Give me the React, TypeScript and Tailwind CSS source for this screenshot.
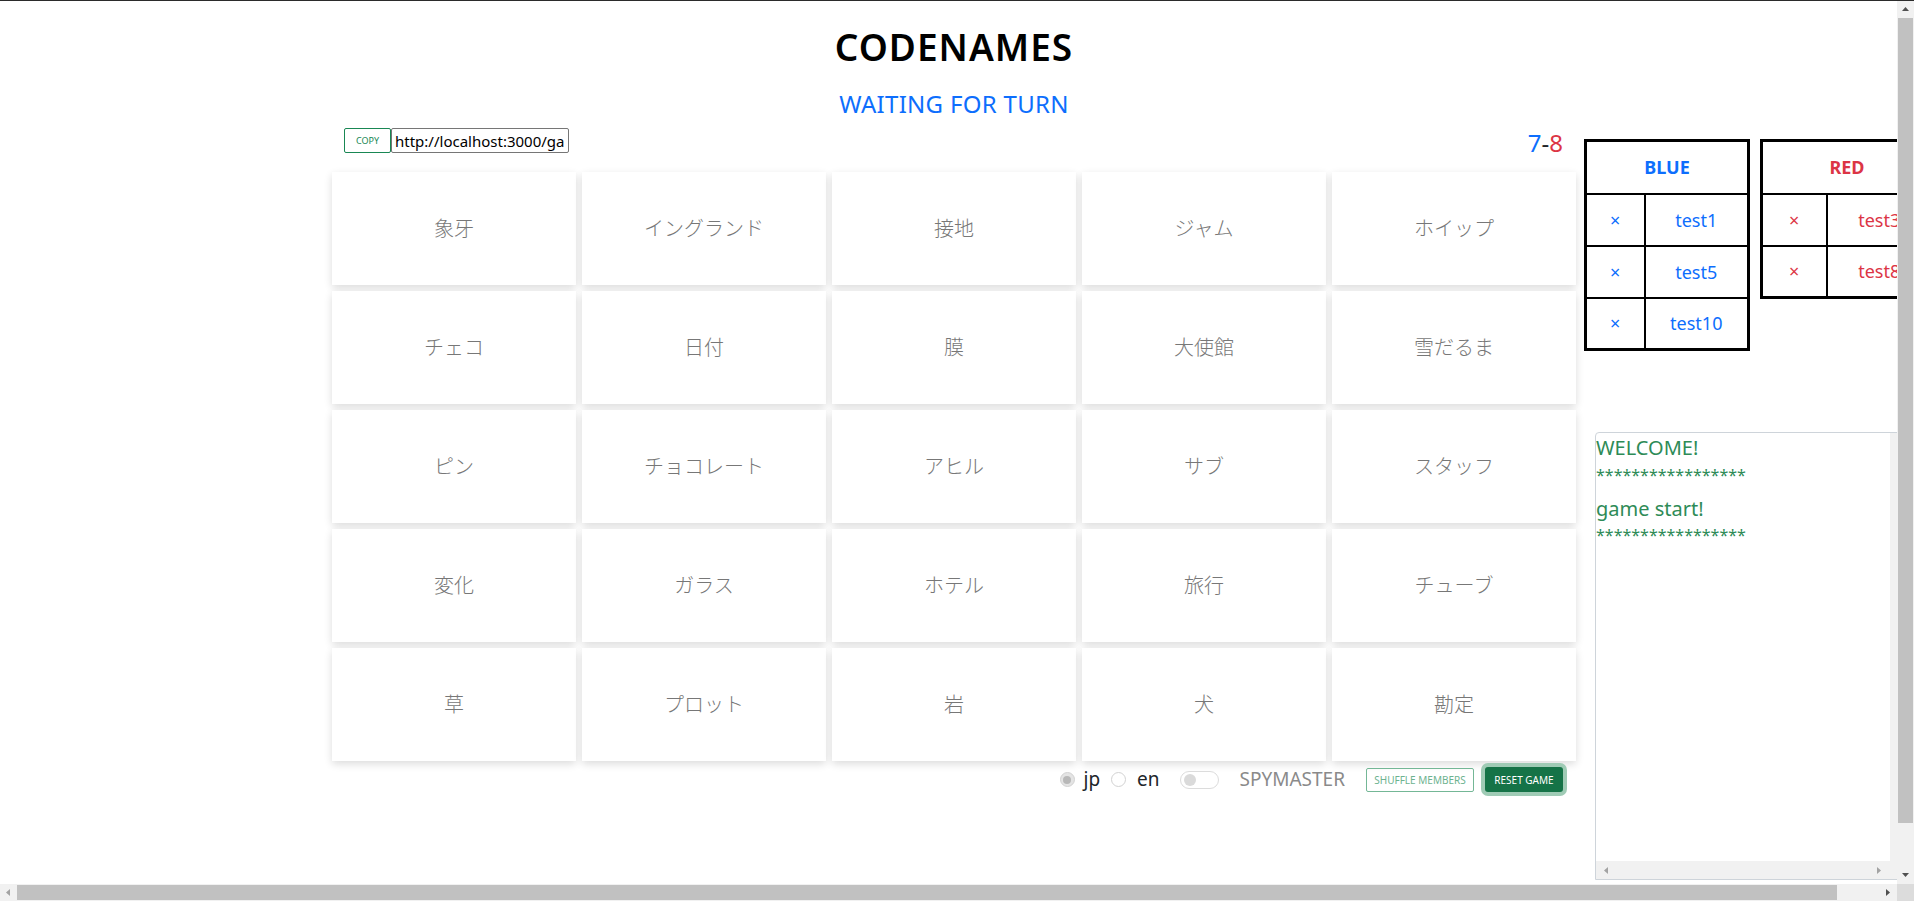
import React from "react";

const words: string[] = [
  "象牙", "イングランド", "接地", "ジャム", "ホイップ",
  "チェコ", "日付", "膜", "大使館", "雪だるま",
  "ピン", "チョコレート", "アヒル", "サブ", "スタッフ",
  "変化", "ガラス", "ホテル", "旅行", "チューブ",
  "草", "プロット", "岩", "犬", "勘定",
];

const FONT = { fontFamily: '"Noto Sans", "Noto Sans CJK JP", sans-serif' };

function Tri({ dir, color }: { dir: "up" | "down" | "left" | "right"; color: string }) {
  const pts: Record<string, string> = {
    up: "1,6 4.5,2 8,6",
    down: "1,2 4.5,6 8,2",
    left: "6,1 2,4.5 6,8",
    right: "2,1 6,4.5 2,8",
  };
  return (
    <svg width="9" height="9" viewBox="0 0 9 9">
      <polygon points={pts[dir]} fill={color} />
    </svg>
  );
}

function TeamTable({
  name,
  members,
  color,
  col1,
  col2,
}: {
  name: string;
  members: string[];
  color: string;
  col1: string;
  col2: string;
}) {
  return (
    <table className="border-collapse border-[3px] border-black self-start shrink-0" style={{ color }}>
      <thead>
        <tr>
          <th colSpan={2} className="border-2 border-black h-[53px] text-[18px] font-bold leading-none text-center">
            {name}
          </th>
        </tr>
      </thead>
      <tbody>
        {members.map((m) => (
          <tr key={m}>
            <td className={`border-2 border-black h-[52px] text-center text-[18px] leading-none ${col1}`}>×</td>
            <td className={`border-2 border-black h-[52px] text-center text-[18px] leading-none ${col2}`}>{m}</td>
          </tr>
        ))}
      </tbody>
    </table>
  );
}

export default function App() {
  return (
    <div className="relative w-[1914px] h-[901px] overflow-hidden bg-white" style={FONT}>
      <div className="w-[1948px] h-[945px] border-t border-[#2b2b2b] flex">
        {/* main column */}
        <div className="ml-[332px] w-[1244px] shrink-0 flex flex-col">
          <h1 className="mt-[27px] text-[37px] tracking-[1px] leading-none font-semibold text-black text-center">
            CODENAMES
          </h1>
          <div className="mt-[27px] text-[24px] tracking-[0.3px] leading-none text-[#0d6efd] text-center">
            WAITING FOR TURN
          </div>

          <div className="mt-[12px] flex justify-between">
            <div className="ml-[12px] flex h-[25px]">
              <button className="w-[47px] h-[25px] border border-[#198754] rounded-[2px] text-[9px] text-[#198754] leading-none">
                COPY
              </button>
              <input
                readOnly
                value="http://localhost:3000/game/8f3a2c"
                className="w-[178px] h-[25px] border border-[#767676] rounded-[2px] px-[3px] text-[15px] text-black outline-none"
                style={FONT}
              />
            </div>
            <div className="mr-[13px] mt-[3px] text-[24px] leading-none">
              <span className="text-[#0d6efd]">7</span>
              <span className="text-[#212529]">-</span>
              <span className="text-[#dc3545]">8</span>
            </div>
          </div>

          <div className="mt-[17px] grid grid-cols-5 gap-[6px]">
            {words.map((w) => (
              <div
                key={w}
                className="h-[113px] bg-white flex items-center justify-center shadow-[0_3px_8px_rgba(0,0,0,0.14)] text-[20px] font-light text-[#777]"
              >
                {w}
              </div>
            ))}
          </div>

          <div className="mt-[6px] flex items-center justify-end pr-[13px] h-[25px]">
            <span className="w-[15px] h-[15px] rounded-full border border-[#d2d2d2] bg-[#e4e4e4] flex items-center justify-center">
              <span className="w-[8px] h-[8px] rounded-full bg-[#b8b8b8]" />
            </span>
            <span className="ml-[9px] text-[19px] leading-none text-[#212529]">jp</span>
            <span className="ml-[11px] w-[15px] h-[15px] rounded-full border border-[#d2d2d2] bg-white" />
            <span className="ml-[11px] text-[19px] leading-none text-[#212529]">en</span>
            <span className="ml-[20px] w-[39px] h-[18px] rounded-full border border-[#dcdcdc] flex items-center px-[3px]">
              <span className="w-[12px] h-[12px] rounded-full bg-[#dadada]" />
            </span>
            <span className="ml-[21px] text-[19px] leading-none text-[#8a8a8a]">SPYMASTER</span>
            <button className="ml-[21px] w-[108px] h-[24px] border border-[#74b796] rounded-[2px] text-[10px] text-[#6cb28f] leading-none">
              SHUFFLE MEMBERS
            </button>
            <button className="ml-[11px] w-[78px] h-[25px] bg-[#157347] rounded-[3px] text-[10px] text-white leading-none ring-4 ring-[#9fcbb5]">
              RESET GAME
            </button>
          </div>
        </div>

        {/* right column */}
        <div className="ml-[8px] mt-[138px] flex flex-col shrink-0">
          <div className="flex gap-[10px] items-start">
            <TeamTable name="BLUE" members={["test1", "test5", "test10"]} color="#0d6efd" col1="w-[59px]" col2="w-[104px]" />
            <TeamTable name="RED" members={["test3", "test8"]} color="#dc3545" col1="w-[65px]" col2="w-[106px]" />
          </div>
          <div className="ml-[11px] mt-[81px] w-[313px] h-[448px] border border-[#ced4da] rounded-tl-[4px] flex text-[#2e8b57] overflow-hidden">
            <div className="flex-1 flex flex-col">
              <div className="flex-1">
                <div className="mt-[5px] text-[20px] leading-none">WELCOME!</div>
                <div className="mt-[9px] text-[16px] leading-none">*****************</div>
                <div className="mt-[16px] text-[20px] leading-none">game start!</div>
                <div className="mt-[8px] text-[16px] leading-none">*****************</div>
              </div>
              <div className="h-[18px] bg-[#f1f1f1] flex items-center justify-between px-[6px]">
                <Tri dir="left" color="#a3a3a3" />
                <Tri dir="right" color="#a3a3a3" />
              </div>
            </div>
            <div className="w-[17px] bg-[#f1f1f1]" />
          </div>
        </div>
      </div>

      {/* browser vertical scrollbar */}
      <div className="absolute right-0 top-[1px] w-[17px] h-[883px] bg-[#f1f1f1] flex flex-col items-center">
        <div className="h-[17px] flex items-center justify-center">
          <Tri dir="up" color="#505050" />
        </div>
        <div className="w-[15px] h-[805px] bg-[#c1c1c1]" />
        <div className="flex-1" />
        <div className="h-[17px] flex items-center justify-center">
          <Tri dir="down" color="#505050" />
        </div>
      </div>
      {/* browser horizontal scrollbar */}
      <div className="absolute left-0 bottom-0 w-[1897px] h-[17px] bg-[#f1f1f1] flex items-center">
        <div className="w-[17px] flex items-center justify-center">
          <Tri dir="left" color="#a3a3a3" />
        </div>
        <div className="w-[1820px] h-[15px] bg-[#c1c1c1]" />
        <div className="flex-1" />
        <div className="w-[17px] flex items-center justify-center">
          <Tri dir="right" color="#505050" />
        </div>
      </div>
      <div className="absolute right-0 bottom-0 w-[17px] h-[17px] bg-[#dcdcdc]" />
    </div>
  );
}
